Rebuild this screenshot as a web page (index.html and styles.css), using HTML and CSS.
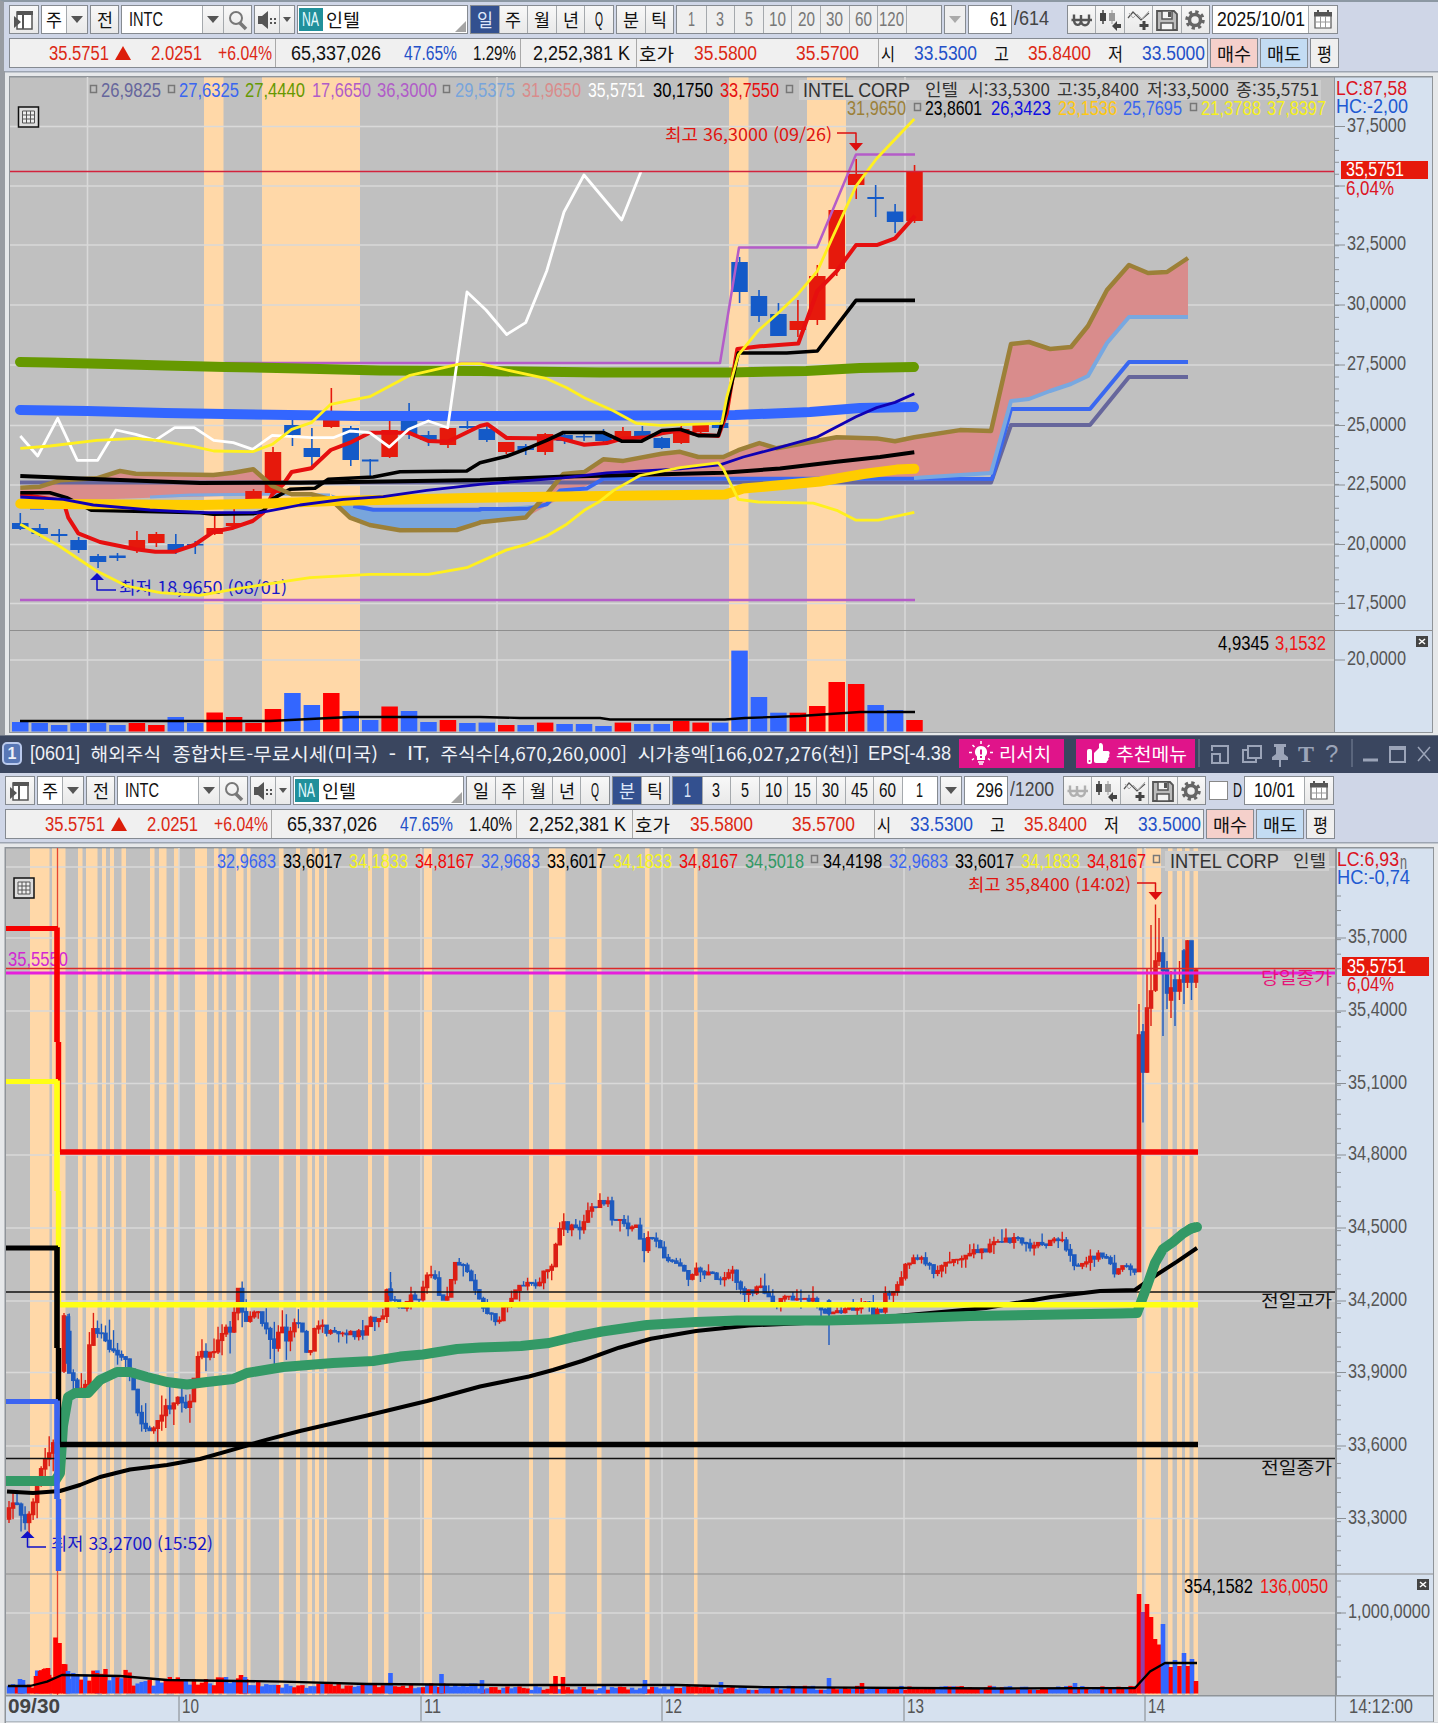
FILE: index.html
```html
<!DOCTYPE html>
<html lang="ko">
<head>
	<meta charset="UTF-8">
	<title>해외주식 종합차트</title>
	<link rel="stylesheet" href="styles.css">
</head>
<body>
	<svg class="defs">
		<symbol id="i-panel" viewBox="0 0 28 28"><path d="M7 6h15v17H7z" fill="#fff" stroke="#555" stroke-width="1.5"/><path d="M7 5h16v4H7zM12 9h2v14h-2zM4 10l7 6-7 6z" fill="#555"/></symbol>
		<symbol id="i-search" viewBox="0 0 28 28"><circle cx="12" cy="12" r="6" fill="none" stroke="#777" stroke-width="2"/><path d="M16 17l6 6" stroke="#777" stroke-width="3.5"/></symbol>
		<symbol id="i-sound" viewBox="0 0 28 28"><path d="M5 10h4l6-5v18l-6-5H5z" fill="#555"/><path d="M17 12h2v2h-2zM21 12h2v2h-2zM17 16h2v2h-2zM21 16h2v2h-2z" fill="#555"/></symbol>
		<symbol id="i-won" viewBox="0 0 28 28"><path d="M6 8.500v5c0 7 7 7 7 1V9v5c0 7 8 7 8 0V8.500M3.500 14h20.500" fill="none" stroke="currentColor" stroke-width="2.400"/></symbol>
		<symbol id="i-candle" viewBox="0 0 28 28"><path d="M7 4v14" stroke="#444" stroke-width="1.500"/><path d="M4 7h6v8H4z" fill="#444"/><path d="M16 4v14" stroke="#999"/><path d="M13 7h6v8h-6z" fill="#999"/><path d="M16 20l5-5v3h4v4h-4v3z" fill="#444"/></symbol>
		<symbol id="i-line" viewBox="0 0 28 28"><path d="M3 12l5-6 8 8 8-7" fill="none" stroke="#555" stroke-width="1.200"/><path d="M4 7l4 5 4-4 5 5 7-8" fill="none" stroke="#aaa"/><path d="M19 15v9M14.500 19.500h9" stroke="#444" stroke-width="3"/></symbol>
		<symbol id="i-save" viewBox="0 0 28 28"><path d="M4 5h17l3 3v16H4z" fill="#bbb" stroke="#555" stroke-width="1.800"/><path d="M9 5h10v8H9zM8 17h12v7H8z" fill="#f4f4f4" stroke="#555" stroke-width="1.500"/><path d="M15 6h3v5h-3z" fill="#555"/></symbol>
		<symbol id="i-gear" viewBox="0 0 28 28"><circle cx="14" cy="14" r="8" fill="none" stroke="#666" stroke-width="3.500" stroke-dasharray="3.200 3.080"/><circle cx="14" cy="14" r="5.500" fill="none" stroke="#666" stroke-width="3.500"/></symbol>
		<symbol id="i-cal" viewBox="0 0 28 28"><path d="M6 8h16v14H6z" fill="#fff" stroke="#555" stroke-width="1.200"/><path d="M5 6h18v4.500H5z" fill="#555"/><path d="M8 4h2v3H8zM18 4h2v3h-2z" fill="#555"/><path d="M11.500 10v12M16.500 10v12M6 16h16" stroke="#999"/></symbol>
		<symbol id="i-bulb" viewBox="0 0 26 26"><path d="M13 5a6 6 0 0 0-4 10.500V19h8v-3.500A6 6 0 0 0 13 5z" fill="#fff"/><path d="M10 21h6M11 23h4" stroke="#fff" stroke-width="1.500"/><path d="M13 8.500v5M13 15v2" stroke="#e0148c" stroke-width="2"/><path d="M13 0v3M4.500 4l2 2M21.500 4l-2 2M1 11.500h3M22 11.500h3M4 19l2-1.500M22 19l-2-1.500" stroke="#fff" stroke-width="1.500"/></symbol>
		<symbol id="i-thumb" viewBox="0 0 26 26"><rect x="2" y="8" width="5" height="15" rx="2" fill="#fff"/><circle cx="4.500" cy="20" r="1" fill="#e0148c"/><path d="M9 12l5-5V3c1-2 4-1 4 2v5h5c2 0 2 3 1 4 1 1 0 3-1 3 1 1 0 3-1 3 0 2-1 2-2 2H11c-1 0-2-1-2-2z" fill="#fff"/></symbol>
	</svg>

	<div class="win top">
		<div class="tools">
			<div class="grp"><b class="ic"><svg><use href="#i-panel"/></svg></b></div>
			<div class="grp combo"><b class="in"><span class="t k" data-w="16">주</span></b><b class="arr"></b></div>
			<div class="grp"><b class="ic"><span class="t k" data-w="16">전</span></b></div>
			<div class="grp code"><b class="in"><span class="t" data-w="34">INTC</span></b><b class="arr"></b><b class="ic"><svg><use href="#i-search"/></svg></b></div>
			<div class="grp snd"><b class="ic"><svg><use href="#i-sound"/></svg></b><b class="arr"></b></div>
			<div class="grp name"><em><span class="t" data-w="17">NA</span></em><span class="t k" data-w="34">인텔</span><i></i></div>
			<div class="grp"><b class="on"><span class="t k" data-w="16">일</span></b><b><span class="t k" data-w="16">주</span></b><b><span class="t k" data-w="16">월</span></b><b><span class="t k" data-w="16">년</span></b><b><span class="t" data-w="8">Q</span></b></div>
			<div class="grp"><b><span class="t k" data-w="16">분</span></b><b><span class="t k" data-w="16">틱</span></b></div>
			<div class="grp mins off"><b><span class="t" data-w="7">1</span></b><b><span class="t" data-w="8">3</span></b><b><span class="t" data-w="8">5</span></b><b><span class="t" data-w="17">10</span></b><b><span class="t" data-w="17">20</span></b><b><span class="t" data-w="17">30</span></b><b><span class="t" data-w="17">60</span></b><b><span class="t" data-w="25">120</span></b><b class="wide"></b></div>
			<div class="grp off"><b class="arr"></b></div>
			<div class="grp cnt"><span class="t" data-w="17">61</span></div>
			<div class="tot"><span class="t" data-w="35">/614</span></div>
			<div class="grp"><b class="ic"><svg><use href="#i-won"/></svg></b><b class="ic"><svg><use href="#i-candle"/></svg></b><b class="ic"><svg><use href="#i-line"/></svg></b><b class="ic"><svg><use href="#i-save"/></svg></b><b class="ic"><svg><use href="#i-gear"/></svg></b></div>
			<div class="grp date"><b class="in"><span class="t" data-w="88">2025/10/01</span></b><b class="cal"><svg><use href="#i-cal"/></svg></b></div>
		</div>
		<div class="quote">
			<div class="vals">
				<div class="c1 up"><span class="t" data-w="60">35.5751</span><i class="tri"></i><span class="t" data-w="51">2.0251</span><span class="t" data-w="54">+6.04%</span></div>
				<div class="c2"><span class="t" data-w="90">65,337,026</span><span class="t dn" data-w="53">47.65%</span><span class="t" data-w="43">1.29%</span></div>
				<div class="c3"><span class="t" data-w="97">2,252,381 K</span></div>
				<div class="c4 up"><span class="t k blk" data-w="35">호가</span><span class="t" data-w="63">35.5800</span><span class="t" data-w="63">35.5700</span></div>
				<div class="c5 dn"><span class="t k blk" data-w="14">시</span><span class="t" data-w="63">33.5300</span><span class="t k blk" data-w="15">고</span><span class="t up" data-w="63">35.8400</span><span class="t k blk" data-w="15">저</span><span class="t" data-w="63">33.5000</span></div>
			</div>
			<div class="act buy"><span class="t k" data-w="34">매수</span></div>
			<div class="act sell"><span class="t k" data-w="34">매도</span></div>
			<div class="act"><span class="t k" data-w="15">평</span></div>
		</div>
		<svg class="chart" id="daily" width="1438" height="665" viewBox="0 70 1438 665"></svg>
	</div>

	<div class="win bottom">
		<div class="title">
			<strong>1</strong>
			<span class="t" data-w="50">[0601]</span>
			<span class="t k" data-w="71">해외주식</span>
			<span class="t k" data-w="207">종합차트-무료시세(미국)</span>
			<span class="t" data-w="8">-</span>
			<span class="t" data-w="24">IT,</span>
			<span class="t k" data-w="187">주식수[4,670,260,000]</span>
			<span class="t k" data-w="222">시가총액[166,027,276(천)]</span>
			<span class="t" data-w="82">EPS[-4.38</span>
			<div class="pink"><svg><use href="#i-bulb"/></svg><span class="t k" data-w="52">리서치</span></div>
			<div class="pink p2"><svg><use href="#i-thumb"/></svg><span class="t k" data-w="71">추천메뉴</span></div>
			<svg class="sys" viewBox="0 0 240 32">
				<g fill="none" stroke="#9ba4b8" stroke-width="2">
					<path d="M4 1v28M157 1v28" stroke="#7b859b" stroke-width="1"/>
					<path d="M17 13V8h16v17H24M17 16h8v9h-8z"/>
					<path d="M53 8h13v12H53zM53 12h-5v12h13v-4"/>
					<path d="M168 22h15" stroke-width="3"/>
					<path d="M195 9h15v15h-15zM195 11h15"/>
					<path d="M223 9l12 14M235 9l-12 14" stroke-width="1.500"/>
				</g>
				<path d="M79 6h12v3h-2v7l4 3v3h-7v7h-2v-7h-7v-3l4-3V9h-2z" fill="#9ba4b8"/>
				<text x="103" y="24" class="ser">T</text>
				<text x="130" y="24" class="qm">?</text>
			</svg>
		</div>
		<div class="tools">
			<div class="grp"><b class="ic"><svg><use href="#i-panel"/></svg></b></div>
			<div class="grp combo"><b class="in"><span class="t k" data-w="16">주</span></b><b class="arr"></b></div>
			<div class="grp"><b class="ic"><span class="t k" data-w="16">전</span></b></div>
			<div class="grp code"><b class="in"><span class="t" data-w="34">INTC</span></b><b class="arr"></b><b class="ic"><svg><use href="#i-search"/></svg></b></div>
			<div class="grp snd"><b class="ic"><svg><use href="#i-sound"/></svg></b><b class="arr"></b></div>
			<div class="grp name"><em><span class="t" data-w="17">NA</span></em><span class="t k" data-w="34">인텔</span><i></i></div>
			<div class="grp"><b><span class="t k" data-w="16">일</span></b><b><span class="t k" data-w="16">주</span></b><b><span class="t k" data-w="16">월</span></b><b><span class="t k" data-w="16">년</span></b><b><span class="t" data-w="8">Q</span></b></div>
			<div class="grp"><b class="on"><span class="t k" data-w="16">분</span></b><b><span class="t k" data-w="16">틱</span></b></div>
			<div class="grp mins"><b class="on"><span class="t" data-w="7">1</span></b><b><span class="t" data-w="8">3</span></b><b><span class="t" data-w="8">5</span></b><b><span class="t" data-w="17">10</span></b><b><span class="t" data-w="17">15</span></b><b><span class="t" data-w="17">30</span></b><b><span class="t" data-w="17">45</span></b><b><span class="t" data-w="17">60</span></b><b class="wide in"><span class="t" data-w="7">1</span></b></div>
			<div class="grp"><b class="arr"></b></div>
			<div class="grp cnt"><span class="t" data-w="27">296</span></div>
			<div class="tot"><span class="t" data-w="44">/1200</span></div>
			<div class="grp"><b class="ic dim"><svg><use href="#i-won"/></svg></b><b class="ic"><svg><use href="#i-candle"/></svg></b><b class="ic"><svg><use href="#i-line"/></svg></b><b class="ic"><svg><use href="#i-save"/></svg></b><b class="ic"><svg><use href="#i-gear"/></svg></b></div>
			<div class="chk"><i></i><span class="t" data-w="9">D</span></div>
			<div class="grp date"><b class="in"><span class="t" data-w="41">10/01</span></b><b class="cal"><svg><use href="#i-cal"/></svg></b></div>
		</div>
		<div class="quote">
			<div class="vals">
				<div class="c1 up"><span class="t" data-w="60">35.5751</span><i class="tri"></i><span class="t" data-w="51">2.0251</span><span class="t" data-w="54">+6.04%</span></div>
				<div class="c2"><span class="t" data-w="90">65,337,026</span><span class="t dn" data-w="53">47.65%</span><span class="t" data-w="43">1.40%</span></div>
				<div class="c3"><span class="t" data-w="97">2,252,381 K</span></div>
				<div class="c4 up"><span class="t k blk" data-w="35">호가</span><span class="t" data-w="63">35.5800</span><span class="t" data-w="63">35.5700</span></div>
				<div class="c5 dn"><span class="t k blk" data-w="14">시</span><span class="t" data-w="63">33.5300</span><span class="t k blk" data-w="15">고</span><span class="t up" data-w="63">35.8400</span><span class="t k blk" data-w="15">저</span><span class="t" data-w="63">33.5000</span></div>
			</div>
			<div class="act buy"><span class="t k" data-w="34">매수</span></div>
			<div class="act sell"><span class="t k" data-w="34">매도</span></div>
			<div class="act"><span class="t k" data-w="15">평</span></div>
		</div>
		<svg class="chart" id="minute" width="1438" height="882" viewBox="0 841 1438 882"></svg>
	</div>

	<script src="chart.js"></script>
</body>
</html>
```
FILE: styles.css
```css
* {
	margin: 0;
	padding: 0;
	box-sizing: border-box;
}
body {
	width: 1438px;
	height: 1723px;
	overflow: hidden;
	background: #cfd6e7;
	color: #111;
	font-family: "Liberation Sans", "Noto Sans CJK KR", sans-serif;
}
.defs {
	display: none;
}
.win {
	position: relative;
}
.top {
	height: 735px;
	padding-top: 3px;
	border-top: 2px solid #8c98a3;
	border-left: 4px solid #989ca2;
}
.bottom {
	height: 988px;
}

/* text squeezed to its cell width */
.t {
	display: inline-block;
	flex: none;
	font-size: 20px;
	line-height: 27px;
	white-space: nowrap;
	transform-origin: 0 50%;
}
.t.k {
	font-size: 18px;
	font-family: "Noto Sans CJK KR", sans-serif;
}

/* first bar */
.tools {
	display: grid;
	column-gap: 2px;
	height: 29px;
	margin-left: 5px;
	grid-template-columns: 30px 47px 29px 131px 41px 171px 144px 58px 266px 22px 44px 51px 143px 126px;
}
.bottom .tools {
	margin-top: 3px;
	grid-template-columns: 30px 47px 29px 131px 41px 171px 144px 58px 266px 22px 44px 51px 143px 34px 90px;
}
.grp {
	display: flex;
	border: 1px solid #868b91;
	background: #fff;
	overflow: hidden;
}
.grp b {
	flex: 1 1 0;
	display: flex;
	align-items: center;
	justify-content: center;
	overflow: hidden;
	border-left: 1px solid #a5a9ad;
	background: linear-gradient(#f8f8f8, #e9e9e9);
	font-weight: normal;
}
.grp b:first-child {
	border-left: 0;
}
.grp svg {
	flex: none;
	width: 28px;
	height: 28px;
}
.grp b.in {
	background: #fff;
}
.grp b.on {
	background: #33508f;
	color: #dfe8fa;
}
.grp b.arr {
	flex: 0 0 21px;
}
.grp b.arr:only-child {
	flex: 1;
}
.arr:before {
	content: "";
	border: 6px solid transparent;
	border-top: 7px solid #555;
	border-bottom: 0;
}
.snd b.arr {
	flex: 0 0 15px;
}
.snd .arr:before {
	border-width: 5px 4px 0;
}
.code .in {
	flex: 1 1 0;
	justify-content: flex-start;
	padding-left: 7px;
}
.code b.ic {
	flex: 0 0 28px;
}
.name {
	position: relative;
}
.name em {
	width: 24px;
	margin: 2px 3px 2px 1px;
	padding-left: 3px;
	background: #20909b;
	color: #e5fbff;
	font-style: normal;
	line-height: 0;
}
.name em .t {
	line-height: 22px;
}
.name i {
	position: absolute;
	right: 1px;
	bottom: 1px;
	border-bottom: 11px solid #a4a4a4;
	border-left: 11px solid transparent;
}
.mins b {
	flex: 0 0 28.600px;
}
.mins b.wide {
	flex: 1;
}
.off b, .off .wide {
	color: #777;
	background: #efefef;
}
.off .arr:before {
	border-top-color: #aaa;
}
.cnt {
	justify-content: flex-end;
	padding-right: 4px;
}
.tot {
	color: #444;
}
.ic {
	color: #555;
}
.ic .t {
	color: #111;
}
.dim {
	color: #b0b0b0;
}
.date .cal {
	flex: 0 0 29px;
}
.chk {
	display: flex;
	align-items: center;
	gap: 5px;
	padding-left: 1px;
}
.chk i {
	width: 19px;
	height: 19px;
	background: #fff;
	border: 1px solid #888;
}

/* quote bar */
.quote {
	display: grid;
	grid-template-columns: 1199px 48px 48px 29px;
	column-gap: 2px;
	height: 30px;
	margin: 4px 0 0 5px;
}
.vals {
	display: grid;
	grid-template-columns: 266px 245px 116px 242px 1fr;
	border: 1px solid #858a91;
	background: #f0f0f0;
}
.vals > div {
	display: grid;
	align-items: center;
	justify-items: end;
	justify-content: start;
	border-right: 1px solid #a9a9a9;
}
.vals > div:last-child {
	border: 0;
}
.vals .c1 { grid-template-columns: 99px 22px 71px 70px; }
.vals .c2 { grid-template-columns: 105px 76px 59px; }
.vals .c3 { grid-template-columns: 109px; }
.vals .c4 { grid-template-columns: 37px 83px 102px; }
.vals .c5 { grid-template-columns: 16px 82px 32px 82px 32px 82px; }
.up { color: #dc2814; }
.dn { color: #2450c8; }
.blk { color: #111; }
.tri {
	border: 8px solid transparent;
	border-bottom: 14px solid #dc1e0a;
	border-top: 0;
}
.act {
	display: flex;
	align-items: center;
	justify-content: center;
	border: 1px solid #858a91;
	background: #efefef;
}
.buy { background: #f5d0cb; }
.sell { background: #c3dcf3; }

/* window title */
.title {
	display: flex;
	align-items: center;
	height: 38px;
	padding: 0 0 2px 2px;
	border-top: 1px solid #6b7484;
	background: #3a465f;
	color: #eef1f7;
}
.title strong {
	width: 20px;
	height: 23px;
	margin-right: 8px;
	border: 2px solid #b9c9ec;
	border-radius: 5px;
	background: #5877b5;
	font-size: 16px;
	line-height: 19px;
	text-align: center;
}
/* gaps keep the words of the caption apart */
.title > span + span {
	border-left: 10px solid transparent;
}
.pink {
	display: flex;
	align-items: center;
	width: 105px;
	height: 29px;
	margin-left: 8px;
	padding-left: 9px;
	gap: 5px;
	background: #e0148a;
	color: #fff;
}
.pink svg {
	width: 26px;
	height: 26px;
}
.pink.p2 {
	width: 119px;
	margin-left: 12px;
}
.sys {
	width: 240px;
	height: 32px;
}
.ser {
	font: bold 24px "Liberation Serif", serif;
	fill: #9ba4b8;
}
.qm {
	font: 24px "Liberation Sans", sans-serif;
	fill: #9ba4b8;
}

/* charts */
.chart {
	display: block;
}
.top .chart {
	margin: 3px 0 0 -4px;
}
.bottom .chart {
	margin-top: 3px;
}
.chart text {
	font-family: "Liberation Sans", "Noto Sans CJK KR", sans-serif;
	font-size: 19.500px;
}
.chart text.k {
	font-size: 17px;
	font-family: "Noto Sans CJK KR", sans-serif;
}
.chart text.b {
	font-weight: bold;
}
```
FILE: chart.js
```js
// squeeze every label to the width given in data-w
var labels = document.querySelectorAll('.t');
for (var i = 0; i < labels.length; i++) {
	var el = labels[i];
	var gap = parseFloat(getComputedStyle(el).borderLeftWidth) || 0;
	var nat = el.getBoundingClientRect().width;
	var w = +el.getAttribute('data-w') + gap;
	el.style.transform = 'scaleX(' + w / nat + ')';
	el.style.marginRight = (w - nat) + 'px';
}

var NS = 'http://www.w3.org/2000/svg';
var RED = '#e6190c', BLUE = '#145ac8', VRED = '#ff0000', VBLUE = '#3366ff';
var svg;

function add(tag, attrs) {
	var e = document.createElementNS(NS, tag);
	for (var k in attrs) e.setAttribute(k, attrs[k]);
	svg.appendChild(e);
	return e;
}
function rect(x1, y1, x2, y2, fill) {
	add('rect', {x: x1, y: y1, width: x2 - x1, height: Math.max(y2 - y1, 1.5), fill: fill});
}
function line(pts, color, w, round) {
	add('polyline', {points: pts, fill: 'none', stroke: color, 'stroke-width': w, 'stroke-linejoin': 'round', 'stroke-linecap': round ? 'round' : 'butt'});
}
function text(x1, x2, y, str, fill, cls) {
	var e = add('text', {x: x1, y: y - 1.2, fill: fill, textLength: x2 - x1, lengthAdjust: 'spacingAndGlyphs'});
	if (cls) e.setAttribute('class', cls);
	e.textContent = str;
}
function box(x, y) {
	add('rect', {x: x + .5, y: y - 11.5, width: 6, height: 7, fill: 'none', stroke: '#777', 'stroke-width': 1.5});
}
// x,y pairs at their own scale and offset -> points
function map(arr, ox, oy, sx, sy) {
	var s = '';
	for (var i = 0; i < arr.length; i += 2) s += (ox + arr[i] / sx).toFixed(1) + ',' + (oy + arr[i + 1] / sy).toFixed(1) + ' ';
	return s;
}
function tableIcon(x, y) {
	add('rect', {x: x, y: y, width: 20, height: 20, fill: '#ddd', stroke: '#111', 'stroke-width': 1.5});
	add('path', {d: 'M' + (x + 4) + ' ' + (y + 4) + 'h12v12h-12zm4 0v12m4-12v12m-8-8h12m-12 4h12', fill: '#eee', stroke: '#555', 'stroke-width': 1});
}
function closeIcon(x, y) {
	rect(x, y, x + 12, y + 11, '#444');
	line((x + 3) + ',' + (y + 3) + ' ' + (x + 9) + ',' + (y + 8), '#fff', 1.5);
	line((x + 9) + ',' + (y + 3) + ' ' + (x + 3) + ',' + (y + 8), '#fff', 1.5);
}

/* ---------- daily chart ---------- */
svg = document.getElementById('daily');
rect(0, 70, 1438, 735, '#e6e8ea');
rect(0, 70, 5, 735, '#989ca2');
rect(5, 70, 1438, 71.5, '#9da5b2');
rect(9, 75, 1433, 732, '#8f9499');
rect(10, 76.5, 1334, 731, '#c0c0c0');
rect(1335, 76.5, 1432, 731, '#d6e1ef');
var bands = [[204, 223.5], [262, 360], [729, 748.5], [807, 846]];
for (i = 0; i < bands.length; i++) rect(bands[i][0], 76.5, bands[i][1], 731, '#ffd8a8');
var gy = [125.5, 185, 244, 304, 364, 424.5, 484, 543.5, 602.5, 659];
for (i = 0; i < gy.length; i++) line('10,' + gy[i] + ' 1334,' + gy[i], '#d9d9d9', 1.5);
line('87.5,76 87.5,731', '#d9d9d9', 1.5);
line('497,76 497,731', '#d9d9d9', 1.5);
line('905,76 905,731', '#d9d9d9', 1.5);
line('10,629.5 1432,629.5', '#8e8e8e', 1.2);

// volume: [top, up?]
var vols = [721,0,722,0,724,0,722,0,722,0,724,0,722,1,724,1,716,0,722,0,711.5,1,716,1,722,1,708,1,692,0,704,0,692,1,710,0,719,0,705.5,1,710,0,721,0,719,1,722,0,721.6,0,724,1,724,0,721.6,1,723,0,723,0,725,0,721.6,1,723,0,723,0,720,1,721.6,1,721.6,0,649.6,0,696,0,711.7,0,711.7,1,705,1,681,1,683,1,704,0,709,0,719,1];
function cx(i) { return 20.3 + 19.44 * i; }
for (i = 0; i < vols.length / 2; i++) rect(cx(i) - 8.3, vols[2 * i], cx(i) + 8.2, 730.5, vols[2 * i + 1] ? VRED : VBLUE);
line('20,720 270,720 310,718 350,716 480,716 520,717 600,717 610,718.5 725,718.5 745,717 800,715 860,711 915,711', '#000', 2.3);

// cloud
var spanA = map([61,440,120,437,180,418,290,412,360,390,407,398,640,402,700,395,760,385,817,435,875,460,934,460,992,475,1050,530,1109,552,1200,568,1370,567,1440,545], 0, 340, 3, 3) +
	map([0,1015,137,1003,200,945,250,893,313,888,370,856,430,860,545,842,600,837,655,850,730,850,775,833,838,815,890,828,1070,800,1190,803,1245,810,1303,800,1440,782], 480, 120, 3, 2.53) +
	'991,430 1011,343 1029,341 1050,348 1071,346 1088,325 1107,289 1129,264 1148,272 1167,271 1188,257';
add('polygon', {points: map([61,440,120,437,180,418,290,412,360,390,407,398,640,402,700,395,760,385,817,435,875,460,450,470,230,478,61,455], 0, 340, 3, 3), fill: '#d98c8c'});
add('polygon', {points: map([992,460,1050,530,1109,552,1200,568,1370,567,1440,545], 0, 340, 3, 3) + map([0,1015,137,1003,190,970,0,980], 480, 120, 3, 2.53) + '375,508', fill: '#78a5dc'});
add('polygon', {points: map([137,1003,200,945,250,893,313,888,370,856,430,860,545,842,600,837,655,850,730,850,775,833,838,815,890,828,1070,800,1190,803,1245,810,1303,800,1440,782], 480, 120, 3, 2.53) +
	'991,430 1011,343 1029,341 1050,348 1071,346 1088,325 1107,289 1129,264 1148,272 1167,271 1188,257 1188,315 1129,315 1107,342 1088,375 1071,383 1050,390 1029,398 1011,400 991,472 914,476 600,479 570,492', fill: '#d98c8c'});
line('20,481.500 991,481.500 1011,424 1090,424 1129,376 1188,376', '#66669c', 4);
line(map([1060,495,1120,506,1440,506], 0, 340, 3, 3) + map([0,982,140,982,200,970,240,935,320,930,370,905,1303,905], 480, 120, 3, 2.53) + '992,478 1011,408 1090,408 1129,361 1188,361', '#3a68f0', 4);
line('150,496 190,494 270,493 330,494', '#80a8e0', 3);
line('914,477 991,472 1011,400 1029,398 1050,390 1071,383 1088,375 1107,342 1129,316 1188,316', '#78a8e0', 4);

// candles: body top, body bottom, high, low, up?
var days = [522,528,512,529,0, 527,533,523,536,0, 533,535,528,541,0, 539,549,536,552,0, 555,561,553,567,0, 554.5,557,552,560,0, 539,549,530,552,1, 533,542,531,546,1, 543,549,533,553,0, 543,544.5,540,553,0, 527,533,514,534,1, 522,525,500,526,1, 490,500,488,501,1, 451,492,446,493,1, 424,434,418,445,0, 447,456,427,465,0, 418,426,387,427,1, 427,459,425,465,0, 458.5,460.5,458,476,0, 429,456,420,457,1, 420,433,402,438,0, 434,439,430,445,0, 427,444,426,447,1, 425,427,418,428,0, 428,439,425,441,0, 441,451,441,453,1, 445,449,443,454,0, 433,451,432,454,1, 434,440,433,443,0, 435,436.5,433,440,0, 433,440,428,441,0, 430,438,426,438,1, 430,437,425,438,0, 437,447,436,448,0, 428,442,424,443,1, 423,431,422,432,1, 422,427,421,428,0, 261,291,256,302,0, 295,315,289,321,0, 313,335,302,335,0, 320,329,299,336,1, 275,319,264,324,1, 209,268,209,275,1, 173,184,158,198,1, 196,198,184,216,0, 210.5,221,203,232,0, 171,220,164,222,1];
for (i = 0; i < days.length / 5; i++) {
	var d = days.slice(5 * i, 5 * i + 5), c = d[4] ? RED : BLUE;
	line(cx(i) + ',' + d[2] + ' ' + cx(i) + ',' + d[3], c, 1.6);
	rect(cx(i) - 8.3, d[0], cx(i) + 8.2, d[1], c);
}
line('30,508 44,508', '#3366ff', 1.5);

line('20,599 915,599', '#b45cc8', 2.5);
line('225,362 720,362 739,246.500 817,246.500 856,153.500 915,153.500', '#b45cc8', 2.5);
line('20,361 48,361.500 110,363 165,364.500 225,366 300,367.500 380,369.500 480,370 600,371.500 730,371.500 806,370 860,367 914,366', '#669900', 10, 1);
line('20,409 87,410 165,412 225,413 360,415 480,415 735,414 810,411 860,407 914,406', VBLUE, 10, 1);
line(map([61,460,190,480,205,530,235,577,300,603,407,625,466,632,524,632,583,612,641,572,700,560,758,540,790,515,817,460,850,430,875,393,934,382,992,327,1050,305,1109,275,1226,275,1285,300,1343,302,1440,255], 0, 340, 3, 3) +
	map([22,767,80,802,240,803,313,819,380,815,430,803,500,800,545,790,600,783,650,793,715,797,740,740,772,577,840,570,955,563,1012,430,1070,380,1128,314,1190,314,1245,297,1305,240], 480, 120, 3, 2.53), '#e60f0f', 4);
line(map([61,455,150,455,200,470,275,508,600,515,640,520,760,518,790,510,815,475,870,445,945,442,985,415,1120,408,1200,392,1400,390,1440,365], 0, 340, 3, 3) +
	map([80,848,137,830,200,808,250,788,370,788,425,810,485,810,545,783,600,780,655,796,715,796,735,740,775,587,920,587,1012,582,1128,454,1305,454], 480, 120, 3, 2.53), '#000', 3.6);
line(spanA, '#9c8038', 4.5);
line(map([61,488,600,492,780,488,1000,480,1440,470], 0, 340, 3, 3) + map([250,950,735,945,790,930,1020,912,1150,893,1250,882,1303,880], 480, 120, 3, 2.53), '#ffcc00', 10, 1);
line(map([61,405,300,415,600,426,900,425,1250,420,1440,417], 0, 340, 3, 3) + map([240,900,730,890,900,879,1070,862,1200,850,1303,838], 480, 120, 3, 2.53), '#000', 4);
line(map([61,468,190,475,280,492,450,507,600,515,780,515,900,492,1030,475,1150,467,1280,448,1440,430], 0, 340, 3, 3) +
	map([250,903,380,890,600,880,720,870,790,850,880,830,1010,800,1128,748,1190,725,1245,712,1303,690], 480, 120, 3, 2.53), '#1000b4', 2.8);
line(map([61,285,113,345,173,232,232,358,293,358,348,267,407,280,466,298,524,260,583,260,641,298,700,305,758,325,817,283,934,290,1000,290,1050,270,1109,275,1168,318,1226,265,1285,240,1343,260], 0, 340, 3, 3) +
	'467,291 486,309 506.700,333.500 525.700,321.600 546.700,270 564,211 584,174 621.700,219 641,170.500', '#fff', 2.8);
text(119, 287, 594, '최저 18,9650 (08/01)', '#1818c8', 'k');
line('97,578 97,589 116,589', '#1010c8', 1.5);
add('polygon', {points: '90,579 104,579 97,572', fill: '#1010c8'});
line(map([61,322,150,315,290,298,407,292,470,298,583,317,641,330,758,332,817,310,875,265,934,245,992,190,1050,178,1109,167,1230,103,1384,68,1440,68], 0, 340, 3, 3) +
	map([80,630,200,652,260,675,313,700,400,733,470,765,540,770,725,765,740,700,775,592,835,530,893,487,952,440,1012,380,1060,290,1128,165,1190,95,1303,-5], 480, 120, 3, 2.53), '#fff01e', 2.8);
line(map([61,550,173,612,290,690,380,735,480,755,600,763,700,745,850,722,930,710,1110,700,1285,700,1400,680,1440,662], 0, 340, 3, 3) +
	map([80,1085,137,1072,200,1050,260,1020,313,985,360,962,400,935,480,897,600,877,715,865,730,880,775,957,835,964,1000,967,1070,985,1128,1010,1195,1010,1303,990], 480, 120, 3, 2.53), '#fff01e', 2.8);
line('10,170.500 1334,170.500', '#d2233c', 1.5);
text(665, 832, 141, '최고 36,3000 (09/26)', '#e0140f', 'k');
line('837,132 856,132 856,143', '#dc0f0f', 1.5);
add('polygon', {points: '849,142 863,142 856,150', fill: '#dc0f0f'});

rect(799, 79, 1321, 99, '#cecece');
box(90, 96); box(168, 96); box(443, 96); box(786, 96); box(914, 114); box(1190, 114);
text(101, 161, 97, '26,9825', '#66669c');
text(179, 239, 97, '27,6325', '#3a66f0');
text(245, 305, 97, '27,4440', '#669900');
text(312, 371, 97, '17,6650', '#b05cc8');
text(377, 437, 97, '36,3000', '#b05cc8');
text(455, 515, 97, '29,5375', '#78a5dc');
text(522, 581, 97, '31,9650', '#d98c8c');
text(588, 645, 97, '35,5751', '#fff');
text(653, 713, 97, '30,1750', '#000');
text(720, 779, 97, '33,7550', '#e60f0f');
text(803, 910, 97, 'INTEL CORP', '#333');
text(925, 958, 96, '인텔', '#333', 'k');
text(968, 1050, 96, '시:33,5300', '#333', 'k');
text(1057, 1139, 96, '고:35,8400', '#333', 'k');
text(1147, 1229, 96, '저:33,5000', '#333', 'k');
text(1236, 1319, 96, '종:35,5751', '#333', 'k');
text(847, 906, 115, '31,9650', '#9c8038');
text(925, 982, 115, '23,8601', '#000');
text(991, 1051, 115, '26,3423', '#0f0fe0');
text(1058, 1117, 115, '23,1536', '#ffc814');
text(1123, 1182, 115, '25,7695', '#3a66f0');
text(1201, 1261, 115, '21,3788', '#f5f01e');
text(1267, 1326, 115, '37,8397', '#f5f01e');
text(1336, 1407, 95, 'LC:87,58', '#dc1423');
text(1336, 1408, 113, 'HC:-2,00', '#1e5ad2');
tableIcon(18.5, 106);
for (i = 0; i < 44; i++) {
	var ty = 125.5 + i * 11.93;
	if (ty < 626) line('1335,' + ty + ' 1339,' + ty, '#8a8f94', 1);
}
var axis = ['37,5000', '', '32,5000', '30,0000', '27,5000', '25,0000', '22,5000', '20,0000', '17,5000', '20,0000'];
for (i = 0; i < axis.length; i++) {
	line('1335,' + gy[i] + ' 1345,' + gy[i], '#8a8f94', 1);
	if (axis[i]) text(1347, 1406, gy[i] + 6.5, axis[i], '#555');
}
rect(1341, 160, 1428, 178, '#e6190c');
text(1346, 1404, 176.5, '35,5751', '#fff');
text(1346, 1394, 195, '6,04%', '#dc1423');
text(1218, 1269, 650, '4,9345', '#000');
text(1275, 1326, 650, '3,1532', '#f01414');
closeIcon(1416, 635);

/* ---------- minute chart ---------- */
svg = document.getElementById('minute');
rect(0, 841, 1438, 1723, '#e6e8ea');
rect(0, 841, 1438, 842.5, '#9da5b2');
rect(4.5, 846, 1434, 1723, '#8f9499');
rect(6, 847.5, 1335, 1694, '#c0c0c0');
rect(1337, 847.5, 1433, 1694, '#d6e1ef');
rect(6, 1695.5, 1433, 1720.5, '#d6e1ef');
rect(6, 1721, 1438, 1723, '#d5d8dc');
bands = [30,49.5, 52,65.5, 78,82.5, 86,97.5, 102,106, 110,114, 121.5,126, 150,154.5, 159,166.5, 174,179, 195,207, 214,218.5, 222,226.5, 236,243.5, 247,250.5, 279,283.5, 296,300, 307.5,312, 315,319, 324,327, 368,372, 384,388.5, 424,432, 529,533, 549,565.5, 597,601.5, 645,649.5, 694,697.5, 1137,1142, 1145,1161, 1168,1172.5, 1177,1182, 1185,1189.5, 1193.5,1198];
for (i = 0; i < bands.length; i += 2) rect(bands[i], 847.5, bands[i + 1], 1694, '#ffd8a8');
gy = [866, 937, 1010, 1082.5, 1154, 1227, 1300, 1371.5, 1445, 1517.5, 1612];
for (i = 0; i < gy.length; i++) line('6,' + gy[i] + ' 1335,' + gy[i], '#d9d9d9', 1.5);
var hours = [179, 421, 662, 904, 1145];
for (i = 0; i < hours.length; i++) line(hours[i] + ',847 ' + hours[i] + ',1694', '#d9d9d9', 1.5);
line('6,1573 1433,1573', '#8e8e8e', 1.2);
line('57.500,847 57.500,1694', '#e64632', 1.3);

// repeatable noise for the one-minute bars
var seed = 7;
function rnd() {
	seed = (seed * 16807) % 2147483647;
	return seed / 2147483647;
}
var path = [8,1518,16,1498,22,1510,28,1520,34,1510,38,1490,44,1465,50,1455,54,1445,60,1435,61,1435,62,1318,66,1318,70,1365,76,1385,82,1385,88,1383,92,1335,98,1327,104,1335,112,1348,118,1350,124,1360,130,1355,134,1385,140,1410,148,1430,153,1432,160,1420,167,1405,175,1405,181,1392,187,1410,193,1395,198,1360,206,1352,214,1355,220,1340,226,1326,233,1335,240,1290,246,1320,254,1315,260,1308,266,1325,272,1338,278,1347,282,1318,288,1340,296,1322,303,1322,308,1350,313,1350,317,1322,326,1328,335,1330,345,1332,355,1333,365,1333,373,1318,384,1322,387,1290,394,1297,404,1308,412,1297,420,1302,428,1275,437,1275,443,1300,450,1295,456,1262,468,1267,474,1285,480,1297,486,1308,494,1315,500,1320,505,1310,512,1298,520,1290,528,1280,537,1289,545,1272,553,1270,557,1250,563,1223,575,1228,583,1225,590,1212,597,1205,604,1198,610,1202,613,1220,620,1215,630,1226,640,1228,645,1250,650,1235,660,1242,668,1258,680,1262,690,1275,698,1268,710,1273,722,1280,735,1272,745,1290,755,1292,762,1282,775,1305,788,1295,800,1300,812,1297,828,1315,840,1312,855,1308,865,1300,875,1312,885,1308,888,1293,897,1288,905,1270,915,1258,925,1256,937,1272,945,1262,960,1258,970,1250,985,1250,1000,1240,1012,1238,1020,1238,1030,1245,1045,1242,1058,1238,1068,1245,1076,1265,1090,1258,1103,1252,1115,1268,1119,1272,1127,1262,1136,1268];
function price(x) {
	for (var k = 0; k < path.length - 2; k += 2)
		if (x <= path[k + 2]) return path[k + 1] + (path[k + 3] - path[k + 1]) * (x - path[k]) / (path[k + 2] - path[k]);
	return path[path.length - 1];
}
function bar(x, o, c, h, l) {
	var col = c <= o ? '#dc1e14' : '#1e5abe';
	line(x + ',' + h + ' ' + x + ',' + l, col, 1.4);
	rect(x - 2.3, Math.min(o, c) - .8, x + 2.3, Math.max(o, c) + .8, col);
}
var prev = price(8);
for (var x = 9; x < 1135; x += 4.02) {
	if (x > 58 && x < 62) { prev = 1360; continue; }
	var p = price(x + 2) + (rnd() - .5) * 7;
	var amp = x < 300 ? 26 : 13;
	bar(x, prev, p, Math.min(prev, p) - rnd() * rnd() * amp, Math.max(prev, p) + rnd() * rnd() * amp);
	prev = p;
	var base = x < 35 ? 8 : x < 66 ? 24 : x < 130 ? 19 : x < 260 ? 13 : x < 480 ? 8 : 6;
	rect(x - 2.2, 1692.5 - base * (.6 + rnd() * .7), x + 2.2, 1692.5, rnd() > .5 ? VRED : VBLUE);
}
var spikes = [20,1678,0, 23,1679,0, 36,1675,1, 40,1670,1, 44,1668,1, 48,1667,1, 55.5,1636.5,1, 59.5,1642,1, 63.5,1663,1, 68,1670,0, 97,1672,1, 104,1673,1, 241,1674,1, 245,1676,0, 390.5,1672,0, 441.5,1673,0, 482,1679,0, 555.5,1675,1, 563,1676,1, 645,1679,0, 721,1681,0, 829,1677,0, 862,1682,1, 1075,1682,0,
	1139,1593,1, 1143,1611,2, 1147,1603,1, 1151,1616,1, 1155,1638,1, 1159,1643.5,1, 1163,1623,0, 1167,1662,0, 1171,1666,1, 1175,1659,0, 1179.5,1665,1, 1184,1652,0, 1188,1665,1, 1192,1658,0, 1196,1680,1];
for (i = 0; i < spikes.length; i += 3)
	rect(spikes[i] - 2.3, spikes[i + 1], spikes[i] + 2.3, 1692.5, [VBLUE, VRED, '#9140aa'][spikes[i + 2]]);
line('8,1685 30,1685 47,1680.600 62,1674 120,1675 167,1679 283,1680.600 367,1683 504,1684 676,1684 757,1686 1002,1687.500 1135,1687 1150,1670.500 1165,1662 1197,1662', '#000', 2.3);

bar(64, 1370, 1315, 1312, 1372);
bar(68, 1316, 1362, 1313, 1372);
bar(829, 1300, 1312, 1298, 1344);
bar(387, 1305, 1290, 1288, 1306);
bar(390.5, 1288, 1294, 1271, 1298);
bar(1139, 1270.5, 1034, 1003, 1271);
bar(1143, 1031, 1071, 1023, 1121.5);
bar(1147, 1071, 1007, 968, 1072);
bar(1151, 1007, 990, 924, 1025);
bar(1155.5, 989, 960, 903.5, 991);
bar(1159, 960, 952, 917, 965);
bar(1163, 952, 969.5, 936, 1035);
bar(1167, 969, 992, 960, 1008);
bar(1171, 999, 987, 970, 1017);
bar(1175, 979, 990, 968, 1025);
bar(1179.5, 990, 979, 960, 999);
bar(1184, 950, 981, 948, 1003);
bar(1187.5, 981, 940, 939, 987);
bar(1191.5, 940, 981, 940, 999);
bar(1196, 981, 969, 968, 987);

text(51, 213, 1550, '최저 33,2700 (15:52)', '#1818c8', 'k');
line('27.500,1536 27.500,1546 46,1546', '#1010c8', 1.5);
add('polygon', {points: '20.500,1537 34.500,1537 27.500,1530', fill: '#1010c8'});
text(8, 68, 966, '35,5550', '#d228d2');
line('6,1291 1335,1291', '#111', 1.3);
line('6,1457.500 1335,1457.500', '#111', 1.3);
line('6,967.500 1335,967.500', '#dc2828', 1.3);
line('6,972 1335,972', '#e61edc', 3);
line('7,1490.500 33,1492 60,1490 80,1484 100,1476 130,1468.500 167,1464 200,1458 233,1448.600 267,1438.600 300,1430 367,1414.500 427,1400 480,1385.500 529,1375.500 553,1369 582,1360 619,1346.700 651,1337.700 696,1330 749,1324.500 827,1321 919,1313 986,1307 1051,1296 1100,1290 1135,1289 1157,1273.500 1177,1260.600 1197,1247', '#000', 4);
line('6,1480 55,1480 60,1472 63,1425 68,1396 75,1392 88,1392 100,1379 117,1371 130,1371 147,1376 167,1381 187,1383.500 207,1381 233,1378 247,1372 283,1366 333,1362 373,1360 400,1355.600 423,1353.500 457,1348 480,1346.500 521,1345 549,1342 574,1336 602,1330.500 647,1324 696,1321 737,1319.500 827,1319.500 888,1318 970,1315 1120,1312.500 1137,1312 1147,1285 1155,1262 1163,1248 1173,1241 1183,1232.500 1192,1227 1196,1226', '#339966', 10);
line('1190,1228 1197,1226', '#339966', 10, 1);
// pivot levels: previous day, drop, current day
function level(y0, mid, next, y1, color) {
	line('6,' + y0 + ' 58,' + y0, color, 5);
	rect(54.2, y0 - 1, 59.8, mid, color);
	rect(55.8, mid, 61.2, next, color);
	if (!y1) return;
	rect(59.5, next, 61.2, y1, color);
	line('60,' + y1 + ' 1198,' + y1, color, 5.5);
}
level(927.5, 1041, 1080, 1151, '#f50000');
level(1080.5, 1190, 1247, 1303.7, '#ffff14');
level(1247, 1347, 1400, 1443.5, '#000');
level(1400.5, 1498, 1570, 0, '#3c64f0');
text(1261, 1332, 984, '당일종가', '#e61478', 'k');
text(1261, 1332, 1307, '전일고가', '#111', 'k');
text(1261, 1332, 1474, '전일종가', '#111', 'k');
text(968, 1131, 891, '최고 35,8400 (14:02)', '#e0140f', 'k');
line('1137,882 1155.500,882 1155.500,892', '#dc0f0f', 1.5);
add('polygon', {points: '1148.500,891 1162.500,891 1155.500,899', fill: '#dc0f0f'});

rect(1165, 850, 1329, 870, '#cecece');
box(811, 866); box(1153, 866);
var heads = [217,'32,9683',0, 283,'33,6017',1, 349,'34,1833',2, 415,'34,8167',3, 481,'32,9683',0, 547,'33,6017',1, 613,'34,1833',2, 679,'34,8167',3, 745,'34,5018',4, 823,'34,4198',1, 889,'32,9683',0, 955,'33,6017',1, 1021,'34,1833',2, 1087,'34,8167',3];
for (i = 0; i < heads.length; i += 3) text(heads[i], heads[i] + 59, 868, heads[i + 1], ['#3c66f0', '#000', '#f5f51e', '#f00a0a', '#339966'][heads[i + 2]]);
text(1170, 1279, 868, 'INTEL CORP', '#333');
text(1293, 1326, 867, '인텔', '#333', 'k');
text(1337, 1399, 866, 'LC:6,93', '#dc1423');
text(1400, 1407, 869, 'n', '#666');
text(1337, 1410, 884, 'HC:-0,74', '#1e5ad2');
tableIcon(14, 877);
for (ty = 895; ty < 1570; ty += 14.55) line('1337,' + ty + ' 1341,' + ty, '#8a8f94', 1);
axis = ['', '35,7000', '35,4000', '35,1000', '34,8000', '34,5000', '34,2000', '33,9000', '33,6000', '33,3000', '1,000,0000'];
for (i = 1; i < axis.length; i++) {
	line('1337,' + gy[i] + ' 1346,' + gy[i], '#8a8f94', 1);
	text(1348, i == 10 ? 1430 : 1407, gy[i] + 6.5, axis[i], '#555');
}
rect(1342, 956, 1429, 975, '#e6190c');
text(1347, 1406, 973.5, '35,5751', '#fff');
text(1347, 1394, 991, '6,04%', '#dc1423');
text(1184, 1253, 1593, '354,1582', '#000');
text(1260, 1328, 1593, '136,0050', '#f01414');
closeIcon(1417, 1578);
for (ty = 1580; ty < 1692; ty += 16) line('1337,' + ty + ' 1341,' + ty, '#8a8f94', 1);
for (i = 0; i < hours.length; i++) {
	line(hours[i] + ',1695 ' + hours[i] + ',1720', '#8f9499', 1.2);
	text(hours[i] + 3, hours[i] + 20, 1713.5, String(10 + i), '#555');
}
line('1335.500,1695 1335.500,1720', '#8f9499', 1.2);
text(8, 60, 1713.5, '09/30', '#444', 'b');
text(1349, 1413, 1713.5, '14:12:00', '#555');
```
